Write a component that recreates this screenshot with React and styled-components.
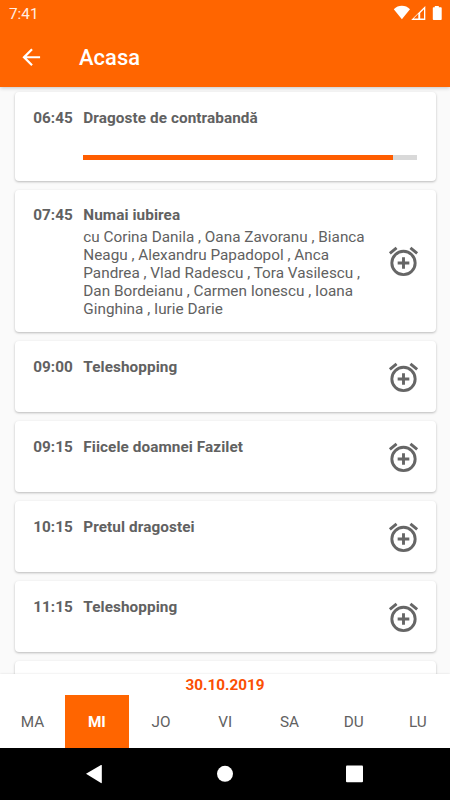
import React from "react";
import styled, { createGlobalStyle } from "styled-components";

const GlobalStyle = createGlobalStyle`
  * { box-sizing: border-box; }
  body { margin: 0; background: #fafafa; overflow: hidden; }
`;

const Screen = styled.div`
  width: 450px;
  height: 800px;
  display: flex;
  flex-direction: column;
  overflow: hidden;
  background: #fafafa;
  color: #616161;
  font-family: Roboto, sans-serif;
  font-size: 15.3px;
  line-height: 18px;
`;

const Header = styled.header`
  flex: none;
  height: 87px;
  background: #ff6500;
  color: #fff;
  box-shadow: 0 1px 4px rgba(0, 0, 0, 0.22);
  z-index: 1;
`;

const StatusBar = styled.div`
  height: 27px;
  padding: 0 8px 0 9px;
  display: flex;
  justify-content: space-between;
  line-height: 28px;
  color: #ffeee3;
`;

const StatusIcons = styled.svg`
  width: 50px;
  height: 27px;
`;

const AppBar = styled.div`
  height: 60px;
  padding-left: 17.5px;
  display: flex;
  align-items: center;
`;

const BackIcon = styled.svg`
  width: 26.5px;
  height: 26.5px;
  fill: #fff;
`;

const Title = styled.h1`
  margin: 2px 0 0 35px;
  font-size: 21.9px;
  line-height: 26px;
  font-weight: 500;
  letter-spacing: 0.06px;
`;

const List = styled.main`
  flex: 1;
  min-height: 0;
  overflow: hidden;
  padding: 5px 14.3px 0 14.5px;
  display: flex;
  flex-direction: column;
  gap: 9px;
`;

const Card = styled.article`
  flex: none;
  height: ${(p) => p.$height}px;
  padding: 16.5px 17px 0 18.8px;
  display: flex;
  background: #fff;
  border-radius: 4px;
  box-shadow: 0 1px 2.5px rgba(0, 0, 0, 0.26);
`;

const Time = styled.time`
  flex: none;
  width: 50px;
  font-weight: 700;
`;

const Info = styled.div`
  flex: 1;
  min-width: 0;
`;

const ShowName = styled.h2`
  margin: 0 0 3.5px;
  font-size: inherit;
  font-weight: 700;
  letter-spacing: 0.08px;
`;

const Cast = styled.p`
  margin: 0;
  white-space: nowrap;
`;

const Progress = styled.div`
  height: 5px;
  margin: 28px 2px 0 0;
  background: #d9d9d9;
`;

const ProgressFill = styled.div`
  width: 93%;
  height: 100%;
  background: #ff5d00;
`;

const AlarmButton = styled.button`
  flex: none;
  align-self: center;
  width: 35px;
  height: 35px;
  margin-top: -15.5px;
  margin-right: -2px;
  padding: 0;
  border: 0;
  background: none;
`;

const AlarmIcon = styled.svg`
  display: block;
  width: 35px;
  height: 35px;
  fill: #666;
`;

const DayPicker = styled.footer`
  flex: none;
  height: 74px;
  background: #fff;
  box-shadow: 0 0 2px rgba(0, 0, 0, 0.12);
  z-index: 1;
`;

const DateLabel = styled.div`
  height: 21px;
  padding-top: 2px;
  text-align: center;
  font-weight: 700;
  color: #fb4f03;
`;

const Days = styled.div`
  display: grid;
  grid-template-columns: repeat(7, 1fr);
  height: 53px;
  padding-left: 0.5px;
`;

const Day = styled.button`
  border: 0;
  padding: 1px 0 0;
  font: inherit;
  font-weight: ${(p) => (p.$active ? 700 : 400)};
  color: ${(p) => (p.$active ? "#fff" : "#616161")};
  background: ${(p) => (p.$active ? "#ff6500" : "transparent")};
`;

const NavBar = styled.nav`
  flex: none;
  height: 52px;
  background: #000;
`;

const NavIcons = styled.svg`
  display: block;
  width: 450px;
  height: 52px;
  fill: #fff;
`;

const shows = [
  { time: "06:45", name: "Dragoste de contrabandă", height: 88.5, progress: true },
  {
    time: "07:45",
    name: "Numai iubirea",
    height: 142.5,
    cast: [
      "cu Corina Danila , Oana Zavoranu , Bianca",
      "Neagu , Alexandru Papadopol , Anca",
      "Pandrea , Vlad Radescu , Tora Vasilescu ,",
      "Dan Bordeianu , Carmen Ionescu , Ioana",
      "Ginghina , Iurie Darie",
    ],
  },
  { time: "09:00", name: "Teleshopping", height: 71 },
  { time: "09:15", name: "Fiicele doamnei Fazilet", height: 71 },
  { time: "10:15", name: "Pretul dragostei", height: 71 },
  { time: "11:15", name: "Teleshopping", height: 71 },
];

const days = ["MA", "MI", "JO", "VI", "SA", "DU", "LU"];

function Alarm() {
  return (
    <AlarmButton aria-label="Alarm">
      <AlarmIcon viewBox="0 0 24 24">
        <path d="M7.88 3.39 6.6 1.86 2 5.71l1.29 1.53zM22 5.72l-4.6-3.86-1.29 1.53 4.6 3.86zM12 4a9 9 0 1 0 0 18 9 9 0 0 0 0-18zm0 16a7 7 0 1 1 0-14 7 7 0 0 1 0 14zm1-11h-2v3H8v2h3v3h2v-3h3v-2h-3z" />
      </AlarmIcon>
    </AlarmButton>
  );
}

function Show({ show }) {
  return (
    <Card $height={show.height}>
      <Time>{show.time}</Time>
      <Info>
        <ShowName>{show.name}</ShowName>
        {show.cast && (
          <Cast>
            {show.cast.map((line) => (
              <React.Fragment key={line}>
                {line}
                <br />
              </React.Fragment>
            ))}
          </Cast>
        )}
        {show.progress && (
          <Progress>
            <ProgressFill />
          </Progress>
        )}
      </Info>
      {!show.progress && <Alarm />}
    </Card>
  );
}

export default function App() {
  return (
    <Screen>
      <GlobalStyle />
      <Header>
        <StatusBar>
          <span>7:41</span>
          <StatusIcons viewBox="0 0 50 27" fill="#fff">
            <path d="M1.8 9.2C6.2 4.7 13.6 4.7 18 9.2L9.9 19.2z" />
            <path
              fillRule="evenodd"
              d="M19.2 20 33.3 6v14zM26.3 18.6v-4.9l-4.6 4.9zM28.2 18.6h3.8V9.2l-3.8 3.8z"
            />
            <path d="M42.8 6h4v1.2h2.1q.8 0 .8.8v11.2q0 .8-.8.8h-7.3q-.8 0-.8-.8V8q0-.8.8-.8h1.2z" />
          </StatusIcons>
        </StatusBar>
        <AppBar>
          <BackIcon viewBox="0 0 24 24">
            <path d="M20 11H7.83l5.59-5.59L12 4l-8 8 8 8 1.41-1.41L7.83 13H20z" />
          </BackIcon>
          <Title>Acasa</Title>
        </AppBar>
      </Header>
      <List>
        {shows.map((show) => (
          <Show key={show.time} show={show} />
        ))}
        <Card $height={71} />
      </List>
      <DayPicker>
        <DateLabel>30.10.2019</DateLabel>
        <Days>
          {days.map((day) => (
            <Day key={day} $active={day === "MI"}>
              {day}
            </Day>
          ))}
        </Days>
      </DayPicker>
      <NavBar>
        <NavIcons viewBox="0 0 450 52">
          <path d="M86 25.7 101 17q.8-.3.8.6v17q0 .8-.8.4z" />
          <circle cx="225" cy="25.8" r="8" />
          <rect x="346" y="17.5" width="17" height="16.8" rx="1" />
        </NavIcons>
      </NavBar>
    </Screen>
  );
}
